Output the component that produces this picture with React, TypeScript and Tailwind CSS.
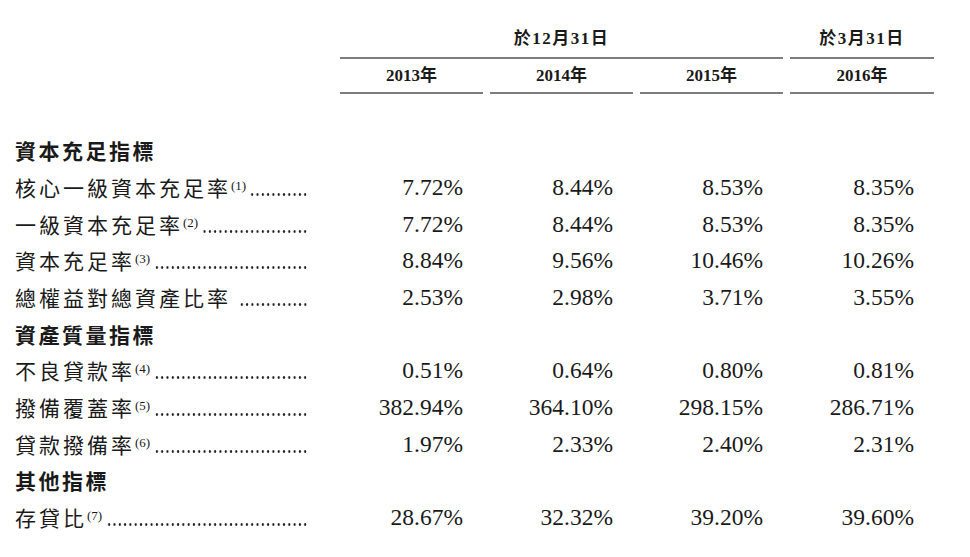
import React from 'react';

type Row =
  | { kind: 'heading'; label: string }
  | { kind: 'data'; label: string; note?: string; values: string[] };

const rows: Row[] = [
  { kind: 'heading', label: '資本充足指標' },
  { kind: 'data', label: '核心一級資本充足率', note: '(1)', values: ['7.72%', '8.44%', '8.53%', '8.35%'] },
  { kind: 'data', label: '一級資本充足率', note: '(2)', values: ['7.72%', '8.44%', '8.53%', '8.35%'] },
  { kind: 'data', label: '資本充足率', note: '(3)', values: ['8.84%', '9.56%', '10.46%', '10.26%'] },
  { kind: 'data', label: '總權益對總資產比率', values: ['2.53%', '2.98%', '3.71%', '3.55%'] },
  { kind: 'heading', label: '資產質量指標' },
  { kind: 'data', label: '不良貸款率', note: '(4)', values: ['0.51%', '0.64%', '0.80%', '0.81%'] },
  { kind: 'data', label: '撥備覆蓋率', note: '(5)', values: ['382.94%', '364.10%', '298.15%', '286.71%'] },
  { kind: 'data', label: '貸款撥備率', note: '(6)', values: ['1.97%', '2.33%', '2.40%', '2.31%'] },
  { kind: 'heading', label: '其他指標' },
  { kind: 'data', label: '存貸比', note: '(7)', values: ['28.67%', '32.32%', '39.20%', '39.60%'] },
];

const years = ['2013年', '2014年', '2015年', '2016年'];

const grid = 'grid grid-cols-[318px_143px_143px_143px_144px] gap-x-[7px] pl-[15px]';
const serif = "font-['Liberation_Serif','Noto_Sans_CJK_TC',serif]";
const cjk = "font-['Noto_Sans_CJK_TC','Liberation_Sans',sans-serif]";

export default function App() {
  return (
    <div className="w-[970px] h-[557px] overflow-hidden bg-white text-[#1a1a1a]">
      {/* Column headers */}
      <div className={`${grid} pt-[28px] ${serif} font-bold text-[17px]`}>
        <div />
        <div className="col-span-3 h-[22px] leading-[22px] text-center tracking-[1.5px]">於12月31日</div>
        <div className="h-[22px] leading-[22px] text-center tracking-[1.5px]">於3月31日</div>

        <div />
        <div className="col-span-3 mt-[7px] h-[2px] bg-[#7d7d7d]" />
        <div className="mt-[7px] h-[2px] bg-[#7d7d7d]" />

        <div />
        {years.map((y) => (
          <div key={y} className="mt-[6px] h-[22px] leading-[22px] text-center">
            {y}
          </div>
        ))}

        <div />
        {years.map((y) => (
          <div key={y} className="mt-[5px] h-[2px] bg-[#7d7d7d]" />
        ))}
      </div>

      {/* Indicator rows */}
      <div className={`${grid} mt-[38.6px]`}>
        {rows.map((row, i) =>
          row.kind === 'heading' ? (
            <div
              key={i}
              className={`col-span-5 h-[36.7px] flex items-center ${cjk} font-bold text-[21px] tracking-[2.5px]`}
            >
              {row.label}
            </div>
          ) : (
            <React.Fragment key={i}>
              <div className="h-[36.7px] flex items-center pr-[25px]">
                <div className="flex items-baseline w-full">
                  <span className={`${cjk} text-[21px] tracking-[3px] whitespace-nowrap`}>{row.label}</span>
                  {row.note && (
                    <span className={`${serif} text-[13px] relative -top-[6px] whitespace-nowrap`}>{row.note}</span>
                  )}
                  {/* dot leader */}
                  <div
                    className={`flex-1 h-[3px] bg-[radial-gradient(circle,#1a1a1a_1px,transparent_1.4px)] bg-[length:5.3px_3px] bg-repeat-x bg-[position:right_bottom] ${
                      row.note ? 'ml-[4px]' : 'ml-[8px]'
                    }`}
                  />
                </div>
              </div>
              {row.values.map((v, j) => (
                <div
                  key={j}
                  className={`h-[36.7px] flex items-center justify-end pr-[20px] ${serif} text-[23.5px]`}
                >
                  {v}
                </div>
              ))}
            </React.Fragment>
          )
        )}
      </div>
    </div>
  );
}
